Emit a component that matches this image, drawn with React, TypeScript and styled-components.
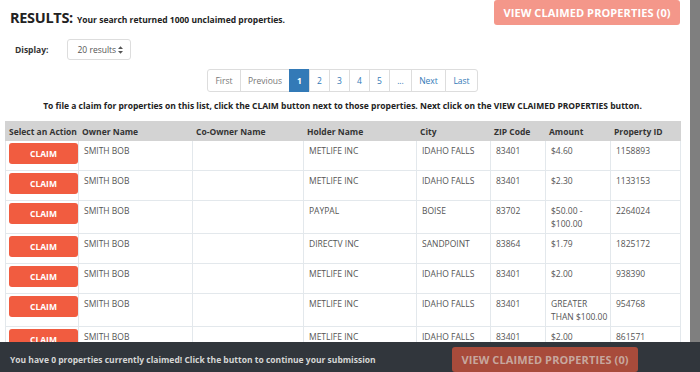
import React from 'react';
import styled, { createGlobalStyle } from 'styled-components';

const GlobalStyle = createGlobalStyle`
  html, body {
    margin: 0;
    padding: 0;
    overflow: hidden;
    background: #fff;
  }
  body {
    font-family: "Open Sans", "Liberation Sans", sans-serif;
    color: #333;
  }
`;

const Page = styled.div`
  display: flex;
  width: 700px;
  height: 372px;
  overflow: hidden;
`;

const Main = styled.div`
  flex: 1;
  padding: 0 10px 0 5px;
  min-width: 0;
`;

const ScrollRail = styled.div`
  width: 10px;
  background: #7f7f7f;
`;

const TopRow = styled.div`
  display: flex;
  justify-content: space-between;
  align-items: flex-start;
  padding-left: 5px;
`;

const Title = styled.div`
  padding-top: 6px;
  color: #222;
`;

const TitleBig = styled.span`
  font-size: 14.5px;
  font-weight: 700;
  letter-spacing: -0.3px;
`;

const TitleSmall = styled.span`
  font-size: 8.5px;
  font-weight: 700;
  margin-left: 4px;
`;

const ViewButton = styled.button<{ $dim?: boolean }>`
  font-family: inherit;
  border: none;
  border-radius: 3px;
  height: 25px;
  width: 186px;
  font-size: 11px;
  font-weight: 700;
  letter-spacing: 0.1px;
  background: ${p => (p.$dim ? '#a84b3b' : '#f4978a')};
  color: ${p => (p.$dim ? '#c7a79e' : '#fff')};
  cursor: pointer;
  padding: 0;
`;

const DisplayRow = styled.div`
  display: flex;
  align-items: center;
  margin-top: 11px;
  padding-left: 10px;
  gap: 19px;
`;

const Label = styled.span`
  font-size: 8.5px;
  font-weight: 700;
  color: #333;
`;

const Select = styled.div`
  display: flex;
  align-items: center;
  justify-content: space-between;
  box-sizing: border-box;
  width: 64px;
  height: 21px;
  padding: 0 7px 0 9px;
  border: 1px solid #ddd;
  border-radius: 3px;
  font-size: 8.5px;
  color: #555;
`;

const Pager = styled.ul`
  display: flex;
  justify-content: center;
  list-style: none;
  margin: 9px 0 0;
  padding: 0;
`;

const PageItem = styled.li<{ $active?: boolean; $muted?: boolean; $w: number }>`
  box-sizing: border-box;
  width: ${p => p.$w}px;
  height: 23px;
  display: flex;
  align-items: center;
  justify-content: center;
  font-size: 8.5px;
  font-weight: ${p => (p.$active ? 700 : 400)};
  border: 1px solid ${p => (p.$active ? '#337ab7' : '#ddd')};
  margin-left: -1px;
  background: ${p => (p.$active ? '#337ab7' : '#fff')};
  color: ${p => (p.$active ? '#fff' : p.$muted ? '#777' : '#337ab7')};
  &:first-child {
    border-radius: 3px 0 0 3px;
    margin-left: 0;
  }
  &:last-child {
    border-radius: 0 3px 3px 0;
  }
`;

const Notice = styled.p`
  margin: 8px 0 0;
  text-align: center;
  font-size: 8.5px;
  font-weight: 700;
  color: #222;
`;

const Table = styled.table`
  margin-top: 10px;
  width: 675px;
  border-collapse: collapse;
  table-layout: fixed;
  font-size: 8.5px;
`;

const HeadCell = styled.th<{ $w: number }>`
  width: ${p => p.$w}px;
  height: 19px;
  box-sizing: border-box;
  padding: 0 3px;
  background: #d3d3d3;
  border: 1px solid #d3d3d3;
  text-align: left;
  font-weight: 700;
  color: #333;
  white-space: nowrap;
`;

const Row = styled.tr`
  height: 30px;
`;

const Cell = styled.td`
  vertical-align: top;
  padding: 4px 2px 3px 5px;
  line-height: 12.5px;
  border: 1px solid #e3e8ec;
  color: #555;
`;

const ActionCell = styled(Cell)`
  padding: 2px 1px 2px 3px;
`;

const ClaimButton = styled.button`
  font-family: inherit;
  width: 69px;
  height: 21px;
  border: none;
  border-radius: 3px;
  background: #f15c40;
  color: #fff;
  font-size: 8.5px;
  font-weight: 700;
  padding: 0;
  cursor: pointer;
`;

const BottomBar = styled.div`
  position: fixed;
  left: 0;
  right: 0;
  bottom: 0;
  height: 30px;
  background: #31363c;
  display: flex;
  align-items: flex-start;
  padding: 0 0 0 10px;
`;

const BarText = styled.span`
  font-size: 8.5px;
  font-weight: 700;
  color: #d6d6d6;
  margin-top: 12px;
  width: 442px;
`;

const BarButtonWrap = styled.div`
  margin-top: 5px;
`;

const pages = [
  { label: 'First', w: 34, muted: true },
  { label: 'Previous', w: 50, muted: true },
  { label: '1', w: 21, active: true },
  { label: '2', w: 21 },
  { label: '3', w: 21 },
  { label: '4', w: 21 },
  { label: '5', w: 21 },
  { label: '...', w: 23 },
  { label: 'Next', w: 35 },
  { label: 'Last', w: 33 },
];

const columns = [
  { label: 'Select an Action', w: 73 },
  { label: 'Owner Name', w: 114 },
  { label: 'Co-Owner Name', w: 111 },
  { label: 'Holder Name', w: 113 },
  { label: 'City', w: 74 },
  { label: 'ZIP Code', w: 55 },
  { label: 'Amount', w: 65 },
  { label: 'Property ID', w: 70 },
];

const rows = [
  ['SMITH BOB', '', 'METLIFE INC', 'IDAHO FALLS', '83401', '$4.60', '1158893'],
  ['SMITH BOB', '', 'METLIFE INC', 'IDAHO FALLS', '83401', '$2.30', '1133153'],
  ['SMITH BOB', '', 'PAYPAL', 'BOISE', '83702', '$50.00 - $100.00', '2264024'],
  ['SMITH BOB', '', 'DIRECTV INC', 'SANDPOINT', '83864', '$1.79', '1825172'],
  ['SMITH BOB', '', 'METLIFE INC', 'IDAHO FALLS', '83401', '$2.00', '938390'],
  ['SMITH BOB', '', 'METLIFE INC', 'IDAHO FALLS', '83401', 'GREATER THAN $100.00', '954768'],
  ['SMITH BOB', '', 'METLIFE INC', 'IDAHO FALLS', '83401', '$2.00', '861571'],
];

const SortIcon = () => (
  <svg width="5" height="8" viewBox="0 0 6 9">
    <path d="M3 0 L6 3.3 H0 Z M3 9 L0 5.7 H6 Z" fill="#555" />
  </svg>
);

const App: React.FC = () => {
  return (
    <Page>
      <GlobalStyle />
      <Main>
        <TopRow>
          <Title>
            <TitleBig>RESULTS:</TitleBig>
            <TitleSmall>Your search returned 1000 unclaimed properties.</TitleSmall>
          </Title>
          <ViewButton>VIEW CLAIMED PROPERTIES (0)</ViewButton>
        </TopRow>

        <DisplayRow>
          <Label>Display:</Label>
          <Select>
            20 results
            <SortIcon />
          </Select>
        </DisplayRow>

        <Pager>
          {pages.map(p => (
            <PageItem key={p.label} $w={p.w} $active={p.active} $muted={p.muted}>
              {p.label}
            </PageItem>
          ))}
        </Pager>

        <Notice>
          To file a claim for properties on this list, click the CLAIM button next to those
          properties. Next click on the VIEW CLAIMED PROPERTIES button.
        </Notice>

        <Table>
          <thead>
            <tr>
              {columns.map(c => (
                <HeadCell key={c.label} $w={c.w}>
                  {c.label}
                </HeadCell>
              ))}
            </tr>
          </thead>
          <tbody>
            {rows.map((r, i) => (
              <Row key={i}>
                <ActionCell>
                  <ClaimButton>CLAIM</ClaimButton>
                </ActionCell>
                {r.map((v, j) => (
                  <Cell key={j}>{v}</Cell>
                ))}
              </Row>
            ))}
          </tbody>
        </Table>
      </Main>
      <ScrollRail />

      <BottomBar>
        <BarText>You have 0 properties currently claimed! Click the button to continue your submission</BarText>
        <BarButtonWrap>
          <ViewButton $dim>VIEW CLAIMED PROPERTIES (0)</ViewButton>
        </BarButtonWrap>
      </BottomBar>
    </Page>
  );
};

export default App;
